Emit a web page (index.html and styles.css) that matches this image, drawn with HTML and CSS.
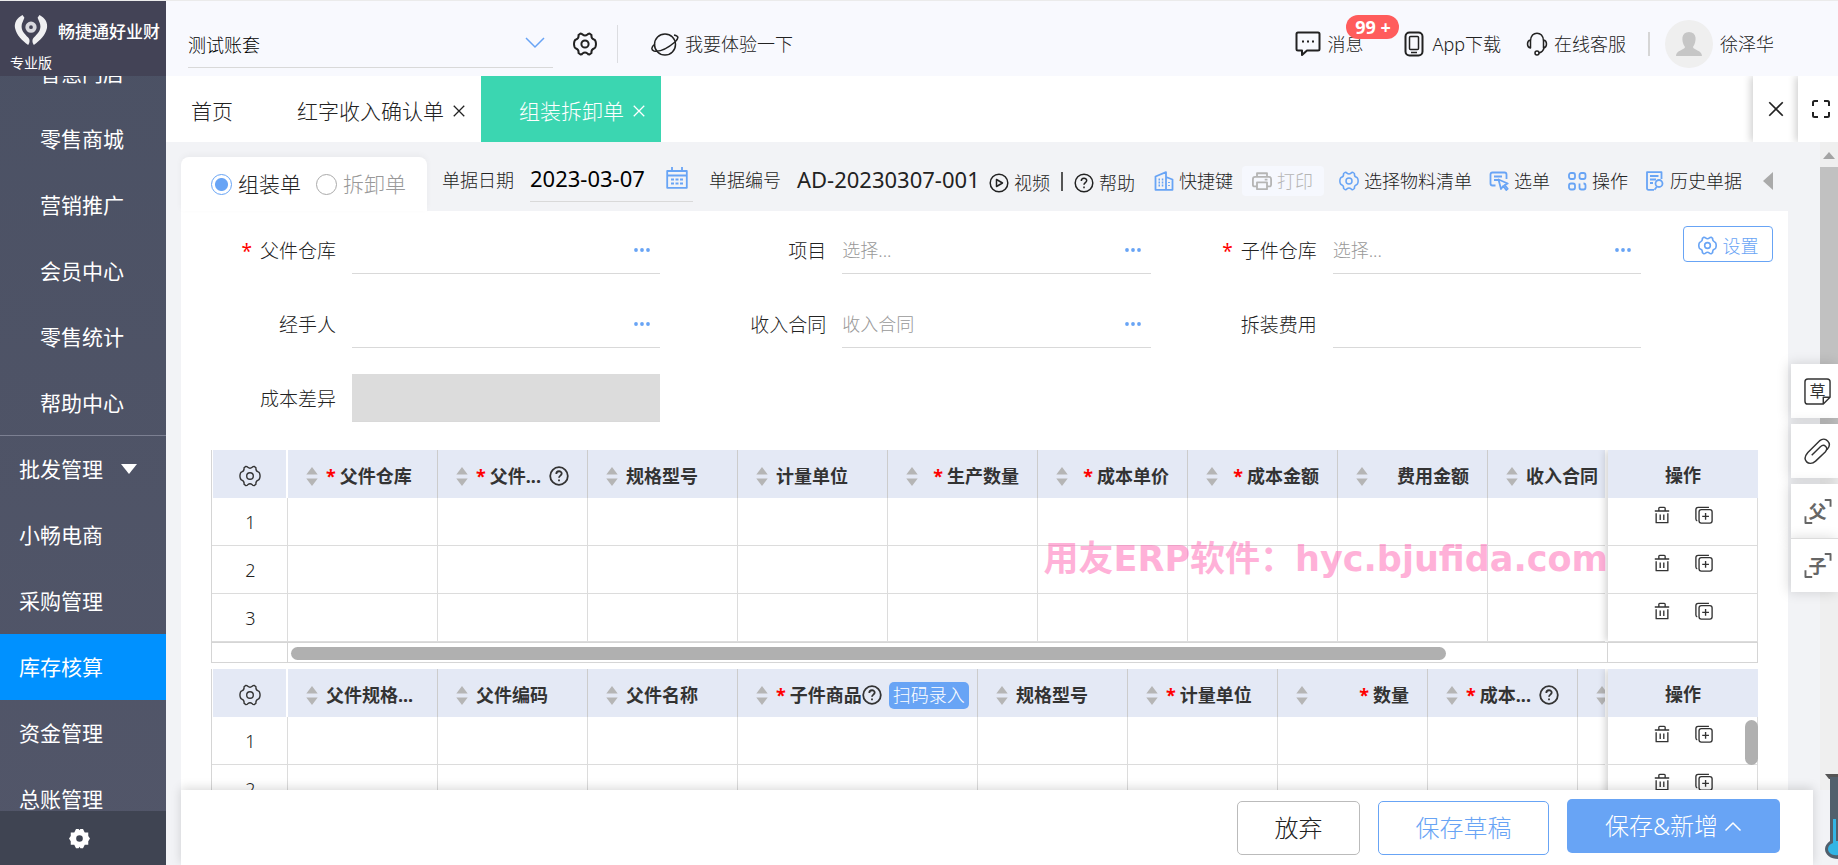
FILE: index.html
```html
<!DOCTYPE html>
<html lang="zh-CN">
<head>
<meta charset="utf-8">
<title>组装拆卸单</title>
<link rel="stylesheet" href="styles.css">
</head>
<body>
<svg class="sprite" aria-hidden="true">
  <symbol id="i-gear" viewBox="0 0 24 24"><path d="M7.500 1.500Q9 1.500 9.500 2.500Q12 4.500 14.500 2.500Q15 1.500 16.500 1.500L18.500 3Q18 6.500 21 7.500Q22.800 8 23 12Q22.800 16 21 16.500Q18 17.500 18.500 21L16.500 22.500Q15 22.500 14.500 21.500Q12 19.500 9.500 21.500Q9 22.500 7.500 22.500L5.500 21Q6 17.500 3 16.500Q1.200 16 1 12Q1.200 8 3 7.500Q6 6.500 5.500 3z"/><circle cx="12" cy="12" r="3.600"/></symbol>
  <symbol id="i-x" viewBox="0 0 16 16"><path d="M2 2l12 12M14 2L2 14"/></symbol>
  <symbol id="i-help" viewBox="0 0 20 20"><circle cx="10" cy="10" r="8.800"/><path d="M7.300 8c0-3.700 5.400-3.500 5.400-.4 0 2-2.700 2.100-2.700 4.200M10 13.600v1.600"/></symbol>
  <symbol id="i-sort" viewBox="0 0 12 20"><path d="M6 0l6 8H0zM6 20l6-8H0z"/></symbol>
  <symbol id="i-trash" viewBox="0 0 18 20"><path d="M1 5.500h16M5.500 5V2.500Q5.500 1.500 6.500 1.500h5q1 0 1 1V5M2.500 8v10.500h13V8M7 9.500v6M11 9.500v6"/></symbol>
  <symbol id="i-copy" viewBox="0 0 20 20"><rect x="4.500" y="4" width="14.500" height="15" rx="2.500"/><path d="M15.500 1.500h-12q-2.500 0-2.500 2.500v10.500q0 1.500 1.500 2M8 11.500h7.500M11.750 7.800v7.500"/></symbol>
  <symbol id="i-dots" viewBox="0 0 16 6"><circle cx="2" cy="3" r="1.900"/><circle cx="8" cy="3" r="1.900"/><circle cx="14" cy="3" r="1.900"/></symbol>
</svg>

<aside class="sidebar">
  <div class="brand">
    <div class="brand-row">
      <svg class="logo" viewBox="0 0 36 34"><path d="M9 1C3 4 0 9 1 15c2 8 7 13 14 18 2-3 2-6 0-8-4-4-7-7-7-12 0-3 2-6 3-9zM27 1c6 3 9 8 8 14-2 8-7 13-14 18-2-3-2-6 0-8 4-4 7-7 7-12 0-3-2-6-3-9z"/><circle class="eye" cx="18" cy="14" r="4"/></svg>
      <span class="brand-name">畅捷通好业财</span>
    </div>
    <span class="edition">专业版</span>
  </div>
  <nav class="menu">
    <ul>
      <li><a class="sub" href="#">智慧门店</a></li>
      <li><a class="sub" href="#">零售商城</a></li>
      <li><a class="sub" href="#">营销推广</a></li>
      <li><a class="sub" href="#">会员中心</a></li>
      <li><a class="sub" href="#">零售统计</a></li>
      <li><a class="sub last" href="#">帮助中心</a></li>
      <li><a href="#">批发管理<svg class="caret" viewBox="0 0 16 10"><path d="M0 0h16L8 10z"/></svg></a></li>
      <li><a href="#">小畅电商</a></li>
      <li><a href="#">采购管理</a></li>
      <li><a class="active" href="#">库存核算</a></li>
      <li><a href="#">资金管理</a></li>
      <li><a href="#">总账管理</a></li>
    </ul>
  </nav>
  <button class="side-settings" aria-label="设置"><svg viewBox="0 0 24 24"><path fill-rule="evenodd" d="M8 1h3l1 1.500L13 1h3l2 4h4v4l2 3-2 3v4h-4l-2 4h-3l-1-1.500L11 23H8l-2-4H2v-4l-2-3 2-3V5h4zM12 8.200a3.800 3.800 0 100 7.600 3.800 3.800 0 000-7.600z"/></svg></button>
</aside>

<main class="main">
  <header class="topbar">
    <div class="account">
      <select aria-label="账套"><option>测试账套</option></select>
      <svg class="chev" viewBox="0 0 20 12"><path d="M1 1l9 9 9-9"/></svg>
    </div>
    <button class="icon-btn" aria-label="账套设置"><svg class="ic i24"><use href="#i-gear"/></svg></button>
    <span class="vline"></span>
    <a class="top-link" href="#"><svg class="ic planet" viewBox="0 0 28 25"><circle cx="14" cy="12.500" r="10.500"/><path d="M4 12C0 15 0 18 3 19c6 1 14-3 21-9 4-4 4-6-1-7"/></svg>我要体验一下</a>
    <div class="top-right">
      <a class="top-link msg" href="#"><svg class="ic bold" viewBox="0 0 26 26"><path d="M3 1.500h20q1.500 0 1.500 1.500v15q0 1.500-1.500 1.500H12L7 24v-4.500H3q-1.500 0-1.500-1.500V3q0-1.500 1.500-1.500zM7 10.500h2M12 10.500h2M17 10.500h2"/></svg>消息<span class="badge">99 +</span></a>
      <a class="top-link app" href="#"><svg class="ic bold" viewBox="0 0 20 26"><rect x="1.500" y="1.500" width="17" height="23" rx="4"/><rect class="thin" x="5.500" y="5.500" width="9" height="13" rx="1"/><path class="thin" d="M7 21.500h6"/></svg>App下载</a>
      <a class="top-link cs" href="#"><svg class="ic" viewBox="0 0 22 24"><path d="M4.500 9C4.500-1.500 17.500-1.500 17.500 9M4.500 8q-3 .5-3 4t3 4zM17.500 8q3 .5 3 4t-3 4zM18 16q-1 4-5 5"/><circle cx="11" cy="21" r="2"/></svg>在线客服</a>
      <span class="vbar"></span>
      <a class="user" href="#"><svg class="avatar" viewBox="0 0 48 48"><circle cx="24" cy="24" r="24"/><path d="M24 12c8 0 8 9 4 15 0 3 9 3 9 9H11c0-6 9-6 9-9-4-6-4-15 4-15z"/></svg>徐泽华</a>
    </div>
  </header>

  <nav class="tabs">
    <a class="tab home" href="#">首页</a>
    <a class="tab" href="#">红字收入确认单<svg class="ic i14"><use href="#i-x"/></svg></a>
    <a class="tab current" href="#">组装拆卸单<svg class="ic i14"><use href="#i-x"/></svg></a>
    <div class="tab-tools">
      <button aria-label="关闭"><svg class="ic i18"><use href="#i-x"/></svg></button>
      <button aria-label="全屏"><svg class="ic bold i18" viewBox="0 0 18 18"><path d="M1 6V2.500Q1 1 2.500 1H6M12 1h3.500Q17 1 17 2.500V6M17 12v3.500q0 1.500-1.500 1.500H12M6 17H2.500Q1 17 1 15.500V12"/></svg></button>
    </div>
  </nav>

  <section class="workspace">
    <div class="page">
      <div class="toolbar">
        <div class="kinds">
          <label><input type="radio" name="kind" checked>组装单</label>
          <label class="muted"><input type="radio" name="kind">拆卸单</label>
        </div>
        <label class="t-label" for="date">单据日期</label>
        <div class="date"><input id="date" value="2023-03-07"><svg class="ic blue" viewBox="0 0 22 22"><path d="M1.200 4h19.600v16.800H1.200zM1 8.500h20M6 0v5M16 0v5M5 12.500h3M9.500 12.500h3M14 12.500h3M5 16.500h3M9.500 16.500h3M14 16.500h3"/></svg></div>
        <span class="t-label">单据编号</span>
        <span class="docno">AD-20230307-001</span>
        <a class="tool low" href="#"><svg class="ic" viewBox="0 0 20 20"><circle cx="10" cy="10" r="8.800"/><path d="M7.500 6.500v7l6-3.500z"/></svg>视频</a>
        <span class="sep"></span>
        <a class="tool low" href="#"><svg class="ic"><use href="#i-help"/></svg>帮助</a>
        <button class="tool quick"><svg class="ic blue" viewBox="0 0 20 20"><path d="M1.500 18.800V5.500L12 1.200v17.600zM12 6l6.500 2.500v10.300H1.500M4.500 8.500h1.500M7.800 8.500h1.500M4.500 11.500h1.500M7.800 11.500h1.500M4.500 14.500h1.500M7.800 14.500h1.500M15 11v1M15 14v1"/></svg>快捷键</button>
        <button class="tool print" disabled><svg class="ic bold" viewBox="0 0 22 20"><path d="M5.500 5.500V1.500h11v4M5 16H3q-2 0-2-2V8q0-2.500 2.500-2.500h15Q21 5.500 21 8v6q0 2-2 2h-2M5.500 11.500h11v7.500h-11zM14 8.500h3"/></svg>打印</button>
        <button class="tool"><svg class="ic blue"><use href="#i-gear"/></svg>选择物料清单</button>
        <button class="tool"><svg class="ic blue" viewBox="0 0 20 20"><path d="M6.500 14.500H3.500q-2 0-2-2v-9q0-2 2-2h12q2 0 2 2V8M5 5.500h8M5 9h4M9.500 8.500l2.500 9.500 2.200-3 3 4 1.500-1.200-3-3.800 3-1.500z"/></svg>选单</button>
        <button class="tool"><svg class="ic blue bold" viewBox="0 0 20 20"><rect x="2" y="2" width="6" height="6" rx="2"/><rect x="12.500" y="2" width="6" height="6" rx="2"/><rect x="2" y="12.500" width="6" height="6" rx="2"/><path d="M12.500 12.500v4q0 2 2 2h2q2 0 2-2v-2q0-2-2-2"/></svg>操作</button>
        <button class="tool"><svg class="ic blue" viewBox="0 0 20 20"><path d="M9 18.800H3.500q-1.500 0-1.500-1.500V1.200h14.500V8M5 5h8.500M5 8.500h6M5 12h3"/><circle cx="14" cy="12.500" r="3.500"/><path d="M12 15.500l-2.500 3.300"/></svg>历史单据</button>
        <button class="fold" aria-label="收起"><svg viewBox="0 0 10 18"><path d="M10 0v18L0 9z"/></svg></button>
      </div>

      <div class="card">
        <div class="form-row">
          <form class="fields">
            <div class="field"><label for="f1"><i>*</i>父件仓库</label><div class="box"><input id="f1"><svg class="dots"><use href="#i-dots"/></svg></div></div>
            <div class="field"><label for="f2">项目</label><div class="box"><input id="f2" placeholder="选择..."><svg class="dots"><use href="#i-dots"/></svg></div></div>
            <div class="field"><label for="f3"><i>*</i>子件仓库</label><div class="box"><input id="f3" placeholder="选择..."><svg class="dots"><use href="#i-dots"/></svg></div></div>
            <div class="field"><label for="f4">经手人</label><div class="box"><input id="f4"><svg class="dots"><use href="#i-dots"/></svg></div></div>
            <div class="field"><label for="f5">收入合同</label><div class="box"><input id="f5" placeholder="收入合同"><svg class="dots"><use href="#i-dots"/></svg></div></div>
            <div class="field"><label for="f6">拆装费用</label><div class="box"><input id="f6"></div></div>
            <div class="field"><label for="f7">成本差异</label><div class="box off"><input id="f7" disabled></div></div>
          </form>
          <button class="set-btn"><svg class="ic"><use href="#i-gear"/></svg>设置</button>
        </div>

        <div class="grid">
          <div class="pane">
            <table>
              <colgroup><col class="c-no"><col><col><col><col><col><col><col><col><col></colgroup>
              <thead><tr>
                <th class="cfg"><svg class="ic i22"><use href="#i-gear"/></svg></th>
                <th><div><svg class="sort"><use href="#i-sort"/></svg><i>*</i>父件仓库</div></th>
                <th><div><svg class="sort"><use href="#i-sort"/></svg><i>*</i>父件...<svg class="ic q end"><use href="#i-help"/></svg></div></th>
                <th><div><svg class="sort"><use href="#i-sort"/></svg>规格型号</div></th>
                <th><div><svg class="sort"><use href="#i-sort"/></svg>计量单位</div></th>
                <th><div><svg class="sort"><use href="#i-sort"/></svg><span class="end"><i>*</i>生产数量</span></div></th>
                <th><div><svg class="sort"><use href="#i-sort"/></svg><span class="end"><i>*</i>成本单价</span></div></th>
                <th><div><svg class="sort"><use href="#i-sort"/></svg><span class="end"><i>*</i>成本金额</span></div></th>
                <th><div><svg class="sort"><use href="#i-sort"/></svg><span class="end">费用金额</span></div></th>
                <th><div><svg class="sort"><use href="#i-sort"/></svg>收入合同</div></th>
              </tr></thead>
              <tbody>
                <tr><td>1</td><td></td><td></td><td></td><td></td><td></td><td></td><td></td><td></td><td></td></tr>
                <tr><td>2</td><td></td><td></td><td></td><td></td><td></td><td></td><td></td><td></td><td></td></tr>
                <tr><td>3</td><td></td><td></td><td></td><td></td><td></td><td></td><td></td><td></td><td></td></tr>
              </tbody>
            </table>
          </div>
          <div class="pinned">
            <table>
              <thead><tr><th class="op">操作</th></tr></thead>
              <tbody>
                <tr><td><div class="ops"><button aria-label="删除"><svg class="ic"><use href="#i-trash"/></svg></button><button aria-label="复制"><svg class="ic"><use href="#i-copy"/></svg></button></div></td></tr>
                <tr><td><div class="ops"><button aria-label="删除"><svg class="ic"><use href="#i-trash"/></svg></button><button aria-label="复制"><svg class="ic"><use href="#i-copy"/></svg></button></div></td></tr>
                <tr><td><div class="ops"><button aria-label="删除"><svg class="ic"><use href="#i-trash"/></svg></button><button aria-label="复制"><svg class="ic"><use href="#i-copy"/></svg></button></div></td></tr>
              </tbody>
            </table>
          </div>
          <span class="watermark">用友ERP软件：hyc.bjufida.com</span>
        </div>
        <div class="hscroll"><span class="cap"></span><span class="rail"><span class="thumb"></span></span><span class="tail"></span></div>

        <div class="grid">
          <div class="pane">
            <table>
              <colgroup><col class="c-no"><col><col><col><col class="c-wide"><col><col><col><col><col></colgroup>
              <thead><tr>
                <th class="cfg"><svg class="ic i22"><use href="#i-gear"/></svg></th>
                <th><div><svg class="sort"><use href="#i-sort"/></svg>父件规格...</div></th>
                <th><div><svg class="sort"><use href="#i-sort"/></svg>父件编码</div></th>
                <th><div><svg class="sort"><use href="#i-sort"/></svg>父件名称</div></th>
                <th><div><svg class="sort"><use href="#i-sort"/></svg><i>*</i>子件商品<svg class="ic q"><use href="#i-help"/></svg><button class="scan">扫码录入</button></div></th>
                <th><div><svg class="sort"><use href="#i-sort"/></svg>规格型号</div></th>
                <th><div><svg class="sort"><use href="#i-sort"/></svg><i>*</i>计量单位</div></th>
                <th><div><svg class="sort"><use href="#i-sort"/></svg><span class="end"><i>*</i>数量</span></div></th>
                <th><div><svg class="sort"><use href="#i-sort"/></svg><i>*</i>成本...<svg class="ic q end"><use href="#i-help"/></svg></div></th>
                <th><div><svg class="sort"><use href="#i-sort"/></svg></div></th>
              </tr></thead>
              <tbody>
                <tr><td>1</td><td></td><td></td><td></td><td></td><td></td><td></td><td></td><td></td><td></td></tr>
                <tr><td>2</td><td></td><td></td><td></td><td></td><td></td><td></td><td></td><td></td><td></td></tr>
              </tbody>
            </table>
          </div>
          <div class="pinned">
            <table>
              <thead><tr><th class="op">操作</th></tr></thead>
              <tbody>
                <tr><td><div class="ops"><button aria-label="删除"><svg class="ic"><use href="#i-trash"/></svg></button><button aria-label="复制"><svg class="ic"><use href="#i-copy"/></svg></button></div></td></tr>
                <tr><td><div class="ops"><button aria-label="删除"><svg class="ic"><use href="#i-trash"/></svg></button><button aria-label="复制"><svg class="ic"><use href="#i-copy"/></svg></button></div></td></tr>
              </tbody>
            </table>
            <span class="vthumb"></span>
          </div>
        </div>
      </div>
    </div>
    <div class="scrollbar"><svg viewBox="0 0 12 7"><path d="M6 0l6 7H0z"/></svg><span></span></div>
  </section>

  <footer class="actions">
    <button class="act">放弃</button>
    <button class="act draft">保存草稿</button>
    <button class="act save">保存&amp;新增<svg class="ic" viewBox="0 0 18 11"><path d="M1.500 9.500L9 2l7.500 7.500"/></svg></button>
  </footer>
</main>

<div class="dock">
  <button aria-label="草稿"><svg class="ic" viewBox="0 0 28 28"><path d="M4 1h20q3 0 3 3v16l-7 7H4q-3 0-3-3V4q0-3 3-3zM20 27v-7h7"/></svg><span class="draft-char">草</span></button>
  <button aria-label="附件"><svg class="ic" viewBox="0 0 28 28"><path d="M24 12C30 5 22-2 16 3L4 15C-3 23 5 30 12 24L22 14.500C26 10 21 5.500 17 9L8 18"/></svg></button>
  <div class="pair">
    <button><svg class="ic frame" viewBox="0 0 30 28"><path d="M22 2h6v7M2 19v7h7"/></svg><span>父</span></button>
    <button><svg class="ic frame" viewBox="0 0 30 28"><path d="M22 2h6v7M2 19v7h7"/></svg><span>子</span></button>
  </div>
</div>
<svg class="thermo" viewBox="0 0 13 86"><path class="t-cap" d="M0 1h13v5H4z"/><path class="t-body" d="M5 4h8v82C6 86 0 82 0 76c0-3 2-6 5-8z"/><path class="t-fill" d="M8 46h3v22h2v14C8 83 3 80 3 76c0-3 2-5 5-6z"/></svg>
</body>
</html>
```
FILE: styles.css
```css
* { box-sizing: border-box; }
body {
  margin: 0;
  height: 100vh;
  display: grid;
  grid-template-columns: 166px minmax(0, 1fr);
  overflow: hidden;
  position: relative;
  font-family: "Noto Sans", "Noto Sans CJK SC", sans-serif;
  font-size: 18px;
  line-height: 24px;
  font-weight: 300;
  color: #222;
  background: #f2f3f6;
}
a { color: inherit; text-decoration: none; }
button, input, select { font: inherit; color: inherit; border: 0; background: none; padding: 0; margin: 0; outline: 0; }
ul { list-style: none; margin: 0; padding: 0; }
i { font-style: normal; color: #f00; }
.sprite { position: absolute; width: 0; height: 0; }
.ic { width: 20px; height: 20px; flex: none; fill: none; stroke: currentColor; stroke-width: 1.5; stroke-linejoin: round; }
.ic.bold { stroke-width: 2; }
.ic .thin { stroke-width: 1.5; }
.ic.blue { color: #68a4f5; stroke-width: 1.8; }
.ic.i14 { width: 14px; height: 14px; }
.ic.i18 { width: 18px; height: 18px; }
.ic.i22 { width: 22px; height: 22px; }
.ic.i24 { width: 24px; height: 24px; stroke-width: 2; }

.sidebar { display: flex; flex-direction: column; min-height: 0; background: linear-gradient(#4b5164, #525669); color: #fff; }
.brand { height: 76px; flex: none; background: #434356; padding: 12px 4px 0 10px; border-top: 1px solid #ebebeb; position: relative; z-index: 1; }
.brand-row { display: flex; align-items: center; gap: 6px; height: 34px; }
.logo { width: 42px; height: 32px; flex: none; fill: #f0f0f2; }
.logo .eye { fill: none; stroke: #d8d8de; stroke-width: 4; }
.brand-name { font-size: 17px; line-height: 20px; font-weight: 500; white-space: nowrap; padding-top: 4px; }
.edition { font-size: 14px; line-height: 20px; font-weight: 400; display: block; padding-top: 6px; }
.menu { flex: 1; min-height: 0; overflow: hidden; font-size: 21px; font-weight: 400; }
.menu ul { margin-top: -36px; }
.menu a { display: flex; align-items: center; gap: 18px; height: 66px; padding-left: 19px; }
.menu a.sub { padding-left: 40px; }
.menu a.last { border-bottom: 1px solid #7c8092; }
.menu a.active { background: #0091ff; }
.caret { width: 16px; height: 10px; fill: #fff; }
.side-settings { height: 54px; flex: none; background: #3f4452; padding-right: 7px; }
.side-settings svg { width: 21px; height: 21px; fill: #fff; display: block; margin: auto; }

.main { display: flex; flex-direction: column; min-width: 0; min-height: 0; }
.topbar { height: 76px; flex: none; display: flex; align-items: center; background: #f8f9fe; border-top: 1px solid #ebebeb; padding: 11px 0 0 22px; }
.account { width: 365px; height: 48px; border-bottom: 1px solid #d9d9d9; display: flex; align-items: center; }
.account select { flex: 1; appearance: none; color: #000; height: 44px; padding-top: 2px; }
.chev { width: 20px; height: 12px; margin: 0 8px 2px 0; fill: none; stroke: #68a4f5; stroke-width: 1.5; }
.icon-btn { margin-left: 20px; height: 24px; color: #222; }
.icon-btn svg { display: block; }
.vline { width: 1px; height: 38px; background: #dcdde1; margin: 0 33px 0 20px; }
.top-link { display: flex; align-items: center; gap: 6px; position: relative; white-space: nowrap; }
.planet { width: 28px; height: 25px; }
.top-right { margin-left: auto; display: flex; align-items: center; padding-right: 64px; }
.msg .ic { width: 26px; height: 26px; }
.badge { position: absolute; left: 51px; top: -16px; height: 24px; width: 53px; border-radius: 12px; background: #ff5c5c; color: #fff; font-weight: 700; text-align: center; }
.app { margin-left: 41px; gap: 8px; }
.app .ic { width: 20px; height: 26px; }
.cs { margin-left: 25px; }
.cs .ic { width: 22px; height: 24px; }
.vbar { width: 2px; height: 24px; background: #d6d6d6; margin: 0 15px 0 22px; }
.user { display: flex; align-items: center; gap: 7px; }
.avatar { width: 48px; height: 48px; fill: #efefef; }
.avatar path { fill: #c6c6c6; }

.tabs { height: 66px; flex: none; display: flex; background: #fff; font-size: 21px; }
.tab { display: flex; align-items: center; gap: 8px; padding: 4px 15px 0 37px; white-space: nowrap; }
.tab.home { padding: 4px 27px 0 25px; }
.tab.current { background: #3bd6b1; color: #fff; padding-left: 38px; }
.tab-tools { margin-left: auto; display: flex; }
.tab-tools button { width: 45px; display: flex; align-items: center; justify-content: center; box-shadow: -2px 0 8px rgba(0, 0, 0, .2); background: #fff; clip-path: inset(0 0 0 -12px); }
.tab-tools button + button { width: 40px; padding-left: 5px; }

.workspace { flex: 1; min-height: 0; display: flex; overflow: hidden; }
.page { flex: 1; min-width: 0; padding: 0 32px 0 15px; }
.toolbar { height: 69px; display: flex; align-items: center; white-space: nowrap; padding-top: 8px; }
.kinds { align-self: flex-end; width: 246px; height: 54px; background: #fff; border-radius: 8px 8px 0 0; box-shadow: 0 -2px 6px rgba(0, 0, 0, .04); display: flex; align-items: center; gap: 15px; padding-left: 30px; font-size: 21px; margin-right: 15px; }
.kinds label { display: flex; align-items: center; gap: 6px; }
.kinds .muted { color: #999; }
.kinds input { appearance: none; width: 21px; height: 21px; border: 1px solid #aaa; border-radius: 50%; background: #fff; }
.kinds input:checked { border-color: #68a4f5; background: radial-gradient(circle, #68a4f5 6px, #fff 7px); }
.t-label { margin-right: 16px; padding-bottom: 2px; }
.date { width: 163px; height: 47px; border-bottom: 1px solid #d9d9d9; display: flex; align-items: center; margin: 0 16px 4px 0; }
.date input { flex: 1; min-width: 0; font-size: 22px; font-weight: 400; color: #000; }
.date .ic { width: 22px; height: 22px; margin-right: 5px; }
.docno { font-size: 22px; font-weight: 400; width: 192px; padding-bottom: 4px; }
.tool { display: flex; align-items: center; gap: 5px; margin-right: 17px; }
.tool.low { padding-top: 4px; margin-right: 0; }
.sep { width: 2px; height: 19px; background: #555; margin: 2px 11px 0; }
.tool.quick { margin: 0 9px 0 19px; }
.tool.print { height: 30px; padding: 0 11px 0 10px; background: #f6f8fe; border-radius: 4px; color: #b5b5b5; margin-right: 15px; }
.fold { margin-left: auto; padding-right: 15px; }
.fold svg { width: 10px; height: 18px; fill: #aaa; display: block; }

.card { background: #fff; padding: 15px 30px 0; }
.form-row { display: flex; align-items: flex-start; margin: 0 -15px 28px -3px; }
.fields { flex: 1; display: grid; grid-template-columns: repeat(3, minmax(0, 1fr)); gap: 26px 38px; }
.field { display: flex; align-items: center; gap: 16px; }
.field label { width: 128px; text-align: right; font-size: 19px; padding-top: 2px; }
.field label i { margin-right: 8px; font-weight: 400; }
.box { flex: 1; min-width: 0; height: 48px; border-bottom: 1px solid #d9d9d9; display: flex; align-items: center; }
.box.off { background: #dcdcdc; }
.box input { flex: 1; min-width: 0; height: 40px; }
.box input::placeholder { color: #999; opacity: 1; }
.dots { width: 16px; height: 6px; fill: #68a4f5; margin-right: 10px; }
.set-btn { display: flex; align-items: center; justify-content: center; gap: 6px; width: 90px; height: 36px; border: 1px solid #68a4f5; border-radius: 4px; color: #68a4f5; margin-left: 42px; padding-top: 3px; }
.set-btn .ic { width: 19px; height: 19px; stroke-width: 2; }

.grid { display: flex; gap: 3px; position: relative; }
.pane { flex: 1; min-width: 0; overflow: hidden; border-left: 1px solid #d5d5d5; }
table { table-layout: fixed; border-collapse: separate; border-spacing: 0; width: 100%; }
.pane table { width: 1px; }
col { width: 150px; }
col.c-no { width: 76px; }
col.c-wide { width: 240px; }
th { height: 48px; background: #e4e9f5; padding: 0 18px; border-right: 1px solid #ccc; font-weight: 700; text-align: left; color: #333; }
th > div { display: flex; align-items: center; white-space: nowrap; padding-top: 4px; }
th i { margin-right: 4px; }
th.cfg { padding: 0; text-align: center; border-right: 2px solid #fff; border-left: 1px solid #fff; }
th.op { text-align: center; border-right: 0; padding: 2px 0 0; }
th .ic { vertical-align: middle; }
th .q { width: 20px; height: 20px; stroke-width: 1.8; }
.sort { width: 12px; height: 19px; fill: #b5b5b5; margin-right: 8px; flex: none; }
.end { margin-left: auto; }
.scan { height: 27px; padding: 0 4px; background: #68a4f5; color: #fff; border-radius: 5px; margin-left: 7px; font-weight: 300; }
th:has(.scan) { padding-right: 0; }
td { height: 48px; padding: 0; border-right: 1px solid #dcdcdc; border-bottom: 1px solid #dcdcdc; text-align: center; }
.pane td { padding-left: 2px; }
.pinned { width: 150px; flex: none; position: relative; box-shadow: -2px 0 8px rgba(0, 0, 0, .2); clip-path: inset(0 0 0 -12px); background: #fff; }
.ops { display: flex; justify-content: center; gap: 24px; padding-bottom: 14px; color: #333; }
.ops button { display: flex; }
.ops .ic { width: 18px; height: 18px; }
.hscroll { display: flex; height: 21px; border: 1px solid #d5d5d5; margin-bottom: 6px; }
.cap { width: 76px; border-right: 1px solid #d5d5d5; }
.rail { flex: 1; padding: 4px 3px; }
.thumb { display: block; width: 88%; height: 13px; border-radius: 7px; background: #b0b0b0; }
.tail { width: 150px; border-left: 1px solid #d5d5d5; }
.vthumb { position: absolute; right: 0; top: 51px; width: 13px; height: 45px; border-radius: 7px; background: #b0b0b0; }
.watermark { position: absolute; right: 150px; top: 86px; font: 700 35px/46px "DejaVu Sans", "Noto Sans CJK SC", sans-serif; color: #ff66b3; opacity: .5; white-space: nowrap; }

.scrollbar { width: 18px; background: #efefef; padding: 10px 0 0; }
.scrollbar svg { display: block; width: 12px; height: 7px; margin: 0 auto 8px; fill: #a3a3a3; }
.scrollbar span { display: block; height: 284px; background: #c1c1c1; }

.actions { height: 75px; flex: none; margin: 0 25px 0 15px; padding: 9px 33px 0 0; background: #fff; box-shadow: 0 -2px 10px rgba(0, 0, 0, .15); display: flex; justify-content: flex-end; gap: 18px; font-size: 24px; position: relative; }
.act { height: 54px; width: 123px; margin-top: 2px; border: 1px solid #bbb; border-radius: 5px; }
.act.draft { width: 171px; border-color: #68a4f5; color: #68a4f5; }
.act.save { width: 213px; margin-top: 0; border: 0; background: #68a4f5; color: #fff; display: flex; align-items: center; justify-content: center; gap: 6px; }
.act.save .ic { width: 18px; height: 11px; }

.dock { position: absolute; right: 0; top: 364px; width: 47px; display: flex; flex-direction: column; gap: 6px; }
.dock button { width: 47px; height: 54px; background: #fff; display: grid; place-items: center; position: relative; box-shadow: -2px 0 12px rgba(0, 0, 0, .15); color: #333; }
.dock button > * { grid-area: 1 / 1; }
.dock .ic { width: 27px; height: 27px; margin-left: 6px; }
.dock .frame { width: 30px; color: #666; stroke-width: 2; }
.dock span { padding-left: 6px; font-weight: 700; color: #666; }
.dock .draft-char { font-size: 16px; font-weight: 400; color: #333; }
.pair button + button { border-top: 1px solid #dcdcdc; }
.thermo { position: absolute; right: 0; bottom: 6px; width: 13px; height: 86px; }
.t-cap { fill: #555; }
.t-body { fill: #52606d; }
.t-fill { fill: #33b5e5; }
```
